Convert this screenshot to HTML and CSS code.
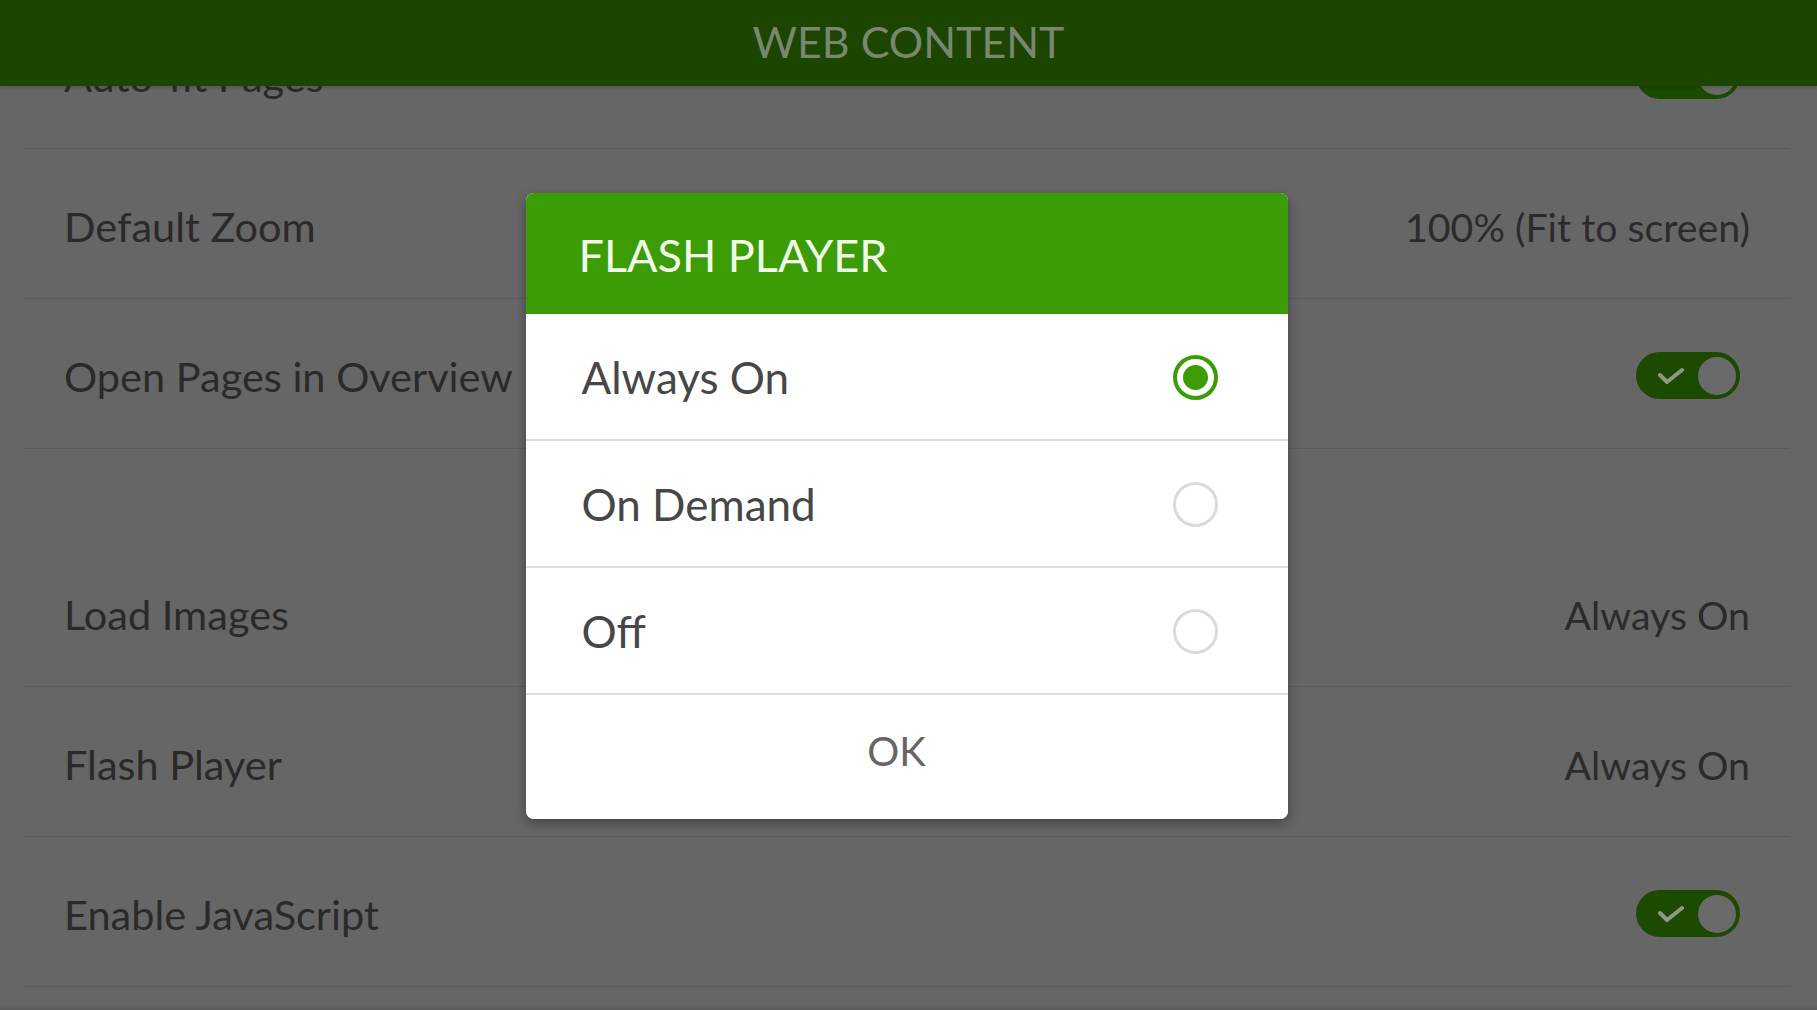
FILE: index.html
```html
<!DOCTYPE html>
<html lang="en">
<head>
    <meta charset="UTF-8">
    <meta name="viewport" content="width=device-width, initial-scale=1.0">
    <title>Web Content</title>
    <link rel="stylesheet" href="styles.css">
</head>
<body>
    <div class="app-bar">WEB CONTENT</div>

    <ul class="settings">
        <li class="setting">
            <span class="label">Auto-fit Pages</span>
            <span class="toggle"><svg class="tick" viewBox="0 0 26 18"><polyline points="2,8 9,15 24,3"/></svg><span class="knob"></span></span>
        </li>
        <li class="setting">
            <span class="label">Default Zoom</span>
            <span class="value">100% (Fit to screen)</span>
        </li>
        <li class="setting">
            <span class="label">Open Pages in Overview</span>
            <span class="toggle"><svg class="tick" viewBox="0 0 26 18"><polyline points="2,8 9,15 24,3"/></svg><span class="knob"></span></span>
        </li>
        <li class="section"></li>
        <li class="setting">
            <span class="label">Load Images</span>
            <span class="value">Always On</span>
        </li>
        <li class="setting">
            <span class="label">Flash Player</span>
            <span class="value">Always On</span>
        </li>
        <li class="setting">
            <span class="label">Enable JavaScript</span>
            <span class="toggle"><svg class="tick" viewBox="0 0 26 18"><polyline points="2,8 9,15 24,3"/></svg><span class="knob"></span></span>
        </li>
    </ul>
    <div class="bottom-shade"></div>

    <div class="scrim">
        <div class="dialog">
            <div class="dialog-title">FLASH PLAYER</div>
            <div class="option">
                <span>Always On</span>
                <span class="radio checked"></span>
            </div>
            <div class="option">
                <span>On Demand</span>
                <span class="radio"></span>
            </div>
            <div class="option">
                <span>Off</span>
                <span class="radio"></span>
            </div>
            <button class="dialog-btn">OK</button>
        </div>
    </div>
</body>
</html>
```

FILE: styles.css
```css
body {
    font-family: Lato, "Open Sans", sans-serif;
    background: #666666;
    margin: 0;
    height: 100vh;
    overflow: hidden;
    position: relative;
}
.app-bar {
    position: absolute;
    top: 0;
    left: 0;
    right: 0;
    height: 86px;
    padding-bottom: 4px;
    box-sizing: border-box;
    background: #1c4500;
    color: #788770;
    font-size: 43px;
    display: flex;
    align-items: center;
    justify-content: center;
    box-shadow: 0 2px 3px rgba(0, 0, 0, 0.15);
    z-index: 2;
}
.settings {
    list-style: none;
    padding: 0;
    margin: -1px 0 0 0;
}
.setting {
    margin: 0 27px 0 24px;
    padding: 5px 40px 0 40px;
    box-sizing: border-box;
    height: 150px;
    border-bottom: 1px solid #5c5c5c;
    display: flex;
    align-items: center;
    justify-content: space-between;
    color: #2a2a2a;
    font-size: 41.5px;
}
.section {
    height: 88px;
}
.value {
    color: #2b2b2b;
    font-size: 39.3px;
}
.toggle {
    width: 104px;
    height: 47px;
    border-radius: 24px;
    background: #1b4a00;
    margin: -1px 10px 0 0;
    display: flex;
    align-items: center;
    justify-content: space-between;
    padding: 0 4px 0 22px;
    box-sizing: border-box;
}
.tick {
    width: 26px;
    height: 18px;
    fill: none;
    stroke: #8d9986;
    stroke-width: 4;
    stroke-linecap: round;
    stroke-linejoin: round;
}
.knob {
    width: 38px;
    height: 38px;
    border-radius: 50%;
    background: #6a6a6a;
}
.bottom-shade {
    position: absolute;
    left: 0;
    right: 0;
    bottom: 0;
    height: 6px;
    background: linear-gradient(to bottom, rgba(0, 0, 0, 0), rgba(0, 0, 0, 0.12));
}

.scrim {
    position: absolute;
    inset: 0;
    display: flex;
    align-items: center;
    justify-content: center;
    z-index: 3;
}
.dialog {
    width: 762px;
    margin: 2px 4px 0 0;
    background: white;
    border-radius: 8px;
    overflow: hidden;
    box-shadow: 0 4px 12px rgba(0, 0, 0, 0.35);
}
.dialog-title {
    height: 121px;
    background: #3c9c06;
    color: #f1fae8;
    font-size: 45px;
    padding: 3px 0 0 53px;
    box-sizing: border-box;
    display: flex;
    align-items: center;
}
.option {
    height: 127px;
    box-sizing: border-box;
    border-bottom: 2px solid #dedede;
    padding: 1px 70px 0 56px;
    display: flex;
    align-items: center;
    justify-content: space-between;
    color: #474747;
    font-size: 44px;
}
.option .radio {
    margin-top: 1px;
}
.radio {
    width: 45px;
    height: 45px;
    box-sizing: border-box;
    border: 3px solid #dadada;
    border-radius: 50%;
    display: flex;
    align-items: center;
    justify-content: center;
}
.radio.checked {
    border: 4px solid #3c9c06;
}
.radio.checked::after {
    content: "";
    width: 25px;
    height: 25px;
    border-radius: 50%;
    background: #3c9c06;
}
.dialog-btn {
    display: block;
    width: 100%;
    height: 124px;
    background: white;
    border: none;
    font-family: inherit;
    font-size: 40px;
    color: #666666;
    padding: 0 20px 12px 0;
    cursor: pointer;
}
```
